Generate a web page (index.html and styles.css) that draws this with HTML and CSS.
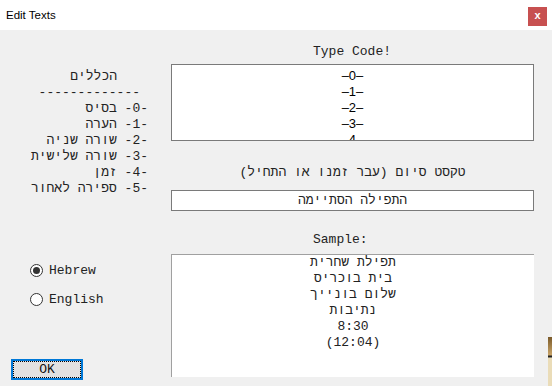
FILE: index.html
```html
<!DOCTYPE html>
<html>
<head>
<meta charset="utf-8">
<link rel="stylesheet" href="styles.css">
</head>
<body>
<div class="window">
  <div class="titlebar">
    <span class="title">Edit Texts</span>
    <span class="close">x</span>
  </div>
  <div class="content">
    <div class="left">
      <div class="rules" dir="rtl">
        <div class="rule-head">הכללים</div>
        <div class="rule-dash">-------------</div>
        <div>-0- בסיס</div>
        <div>-1- הערה</div>
        <div>-2- שורה שניה</div>
        <div>-3- שורה שלישית</div>
        <div>-4- זמן</div>
        <div>-5- ספירה לאחור</div>
      </div>
      <div class="radios">
        <div class="radio-row"><span class="radio checked"></span><span class="radio-label">Hebrew</span></div>
        <div class="radio-row second"><span class="radio"></span><span class="radio-label">English</span></div>
      </div>
      <div class="ok-btn"><span class="ok-focus">OK</span></div>
    </div>
    <div class="right">
      <div class="label label-left first">Type Code!</div>
      <div class="codebox">
        <div>–0–</div>
        <div>–1–</div>
        <div>–2–</div>
        <div>–3–</div>
        <div>–4–</div>
      </div>
      <div class="label label-center end-label" dir="rtl">טקסט סיום (עבר זמנו או התחיל)</div>
      <div class="endbox" dir="rtl">התפילה הסתיימה</div>
      <div class="label label-left sample-label">Sample:</div>
      <div class="samplebox" dir="rtl">
        <div>תפילת שחרית</div>
        <div>בית בוכריס</div>
        <div>שלום בונייך</div>
        <div>נתיבות</div>
        <div>8:30</div>
        <div>(12:04)</div>
      </div>
    </div>
  </div>
  <div class="behind"></div>
</div>
</body>
</html>
```

FILE: styles.css
```css
* { box-sizing: border-box; }
html, body { margin: 0; padding: 0; }
body {
  width: 552px;
  height: 386px;
  overflow: hidden;
  background: #f0f0f0;
  font-family: "Liberation Mono", "DejaVu Sans Mono", monospace;
  font-size: 13px;
  color: #1a1a1a;
}
.window {
  position: relative;
  width: 552px;
  height: 386px;
}
.titlebar {
  height: 30px;
  background: #ffffff;
  display: flex;
  align-items: center;
  justify-content: space-between;
  padding: 0 5px 0 6px;
}
.title {
  font-family: "Segoe UI", "Liberation Sans", sans-serif;
  font-size: 11.5px;
  color: #000;
  margin-top: -1px;
}
.close {
  width: 19px;
  height: 19px;
  margin-top: 3px;
  background: #c75050;
  color: #fff;
  font-family: "Liberation Sans", sans-serif;
  font-weight: bold;
  font-size: 11px;
  line-height: 17px;
  text-align: center;
}
.content {
  display: flex;
}
.left {
  width: 171px;
  display: flex;
  flex-direction: column;
}
.rules {
  margin-top: 39px;
  width: 148px;
  text-align: right;
  line-height: 16px;
  white-space: nowrap;
  color: #222;
}
.rule-head { padding-right: 31px; }
.rule-dash { padding-right: 8px; }
.radios {
  margin-top: 65px;
  padding-left: 30px;
}
.radio-row {
  display: flex;
  align-items: center;
  height: 16px;
}
.radio-row.second { margin-top: 13px; }
.radio {
  width: 13px;
  height: 13px;
  border: 1px solid #333;
  border-radius: 50%;
  background: #fff;
  display: flex;
  align-items: center;
  justify-content: center;
  flex: none;
}
.radio.checked::after {
  content: "";
  width: 7px;
  height: 7px;
  border-radius: 50%;
  background: #333;
}
.radio-label {
  margin-left: 6px;
  color: #222;
}
.ok-btn {
  margin-top: 52px;
  margin-left: 11px;
  width: 72px;
  height: 21px;
  border: 2px solid #0078d7;
  background: #e1e1e1;
  padding: 0;
}
.ok-focus {
  display: block;
  height: 100%;
  border: 1px dotted #000;
  text-align: center;
  line-height: 15px;
  color: #111;
}
.right {
  width: 363px;
  display: flex;
  flex-direction: column;
}
.label {
  line-height: 16px;
  height: 16px;
  color: #222;
}
.label-left { padding-left: 142px; }
.label-center { text-align: center; }
.first { margin-top: 14px; }
.codebox {
  margin-top: 4px;
  height: 77px;
  background: #fff;
  border: 1px solid #7a7a7a;
  padding-top: 3px;
  overflow: hidden;
  font-family: "Liberation Sans", sans-serif;
  font-size: 13px;
  line-height: 16px;
  text-align: center;
  color: #000;
}
.end-label { margin-top: 24px; }
.endbox {
  margin-top: 9px;
  height: 21px;
  background: #fff;
  border: 1px solid #7a7a7a;
  text-align: center;
  line-height: 19px;
  color: #222;
}
.sample-label { margin-top: 21px; }
.samplebox {
  margin-top: 6px;
  height: 123px;
  background: #fff;
  border-top: 1px solid #a0a0a0;
  border-left: 1px solid #a0a0a0;
  line-height: 16px;
  text-align: center;
  color: #222;
}
.behind {
  position: absolute;
  left: 548px;
  top: 337px;
  width: 4px;
  height: 49px;
  background: linear-gradient(to bottom, #7a5a2a 0px, #c9a468 18px, #222 19px, #222 20px, #eadcb8 21px, #eadcb8 100%);
}
```
